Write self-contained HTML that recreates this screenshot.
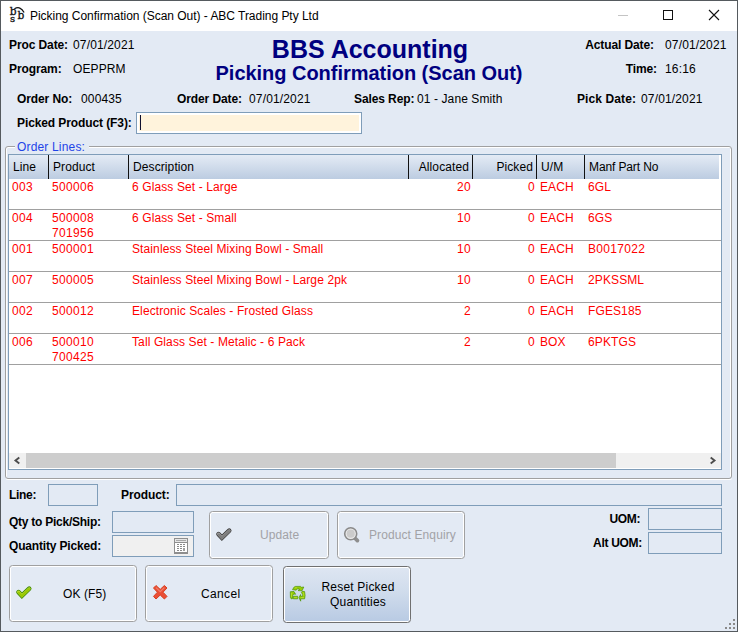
<!DOCTYPE html>
<html><head><meta charset="utf-8">
<style>
*{box-sizing:border-box;margin:0;padding:0}
html,body{width:738px;height:632px;overflow:hidden;background:#555a5e}
body{font-family:"Liberation Sans",sans-serif;font-size:12px;color:#000;position:relative}
/* all children of .win are positioned in absolute page coordinates */
.win{position:absolute;left:0;top:0;width:738px;height:632px}
.bg{position:absolute;left:1px;top:1px;width:736px;height:630px;background:#e3eaf4}
.tbar{position:absolute;left:1px;top:1px;width:736px;height:30px;background:#fff}
.a{position:absolute;white-space:nowrap;line-height:14px;letter-spacing:.1px}
.r{text-align:right}
.b{font-weight:bold;letter-spacing:-.1px}
.d{letter-spacing:.15px}
.t{letter-spacing:.33px}
.inp{position:absolute;border:1px solid #7f9db9;background:#e3eaf4}
.btn{position:absolute;border:1px solid #a0a0a0;border-radius:3.5px;background:#e3eaf4;box-shadow:inset 0 0 0 1px #fff}
.navy{color:#000080}
.th{position:absolute;top:0;height:24px;line-height:25px;padding-left:4px;white-space:nowrap;letter-spacing:.1px}
.sep{position:absolute;top:0;width:1px;height:24px;background:#111}
.row{position:absolute;left:9px;width:712px;height:31px;border-bottom:1px solid #a0a0a0;background:#fff;color:#ff0000}
.row span{position:absolute;top:1px;line-height:15px;white-space:nowrap;letter-spacing:.11px}
.row span.t{letter-spacing:.33px}
svg{position:absolute;overflow:visible}
</style></head><body>
<div class="win">
<div class="bg"></div>
<div class="tbar"></div>
<svg style="left:0;top:0" width="40" height="31">
  <g font-family="DejaVu Serif, Liberation Serif, serif" font-size="10.6" fill="#111" stroke="#111" stroke-width=".3">
  <text x="9.7" y="14.8">b</text>
  <text x="10.1" y="22.2" font-size="10">s</text>
  <text x="17.6" y="18.9">b</text></g>
  <path d="M14.4 8.8 Q20.4 5.4 24.1 12.5" fill="none" stroke="#111" stroke-width="1.3"/>
</svg>
<div class="a" style="left:30px;top:8px;font-size:12px;line-height:16px;letter-spacing:-.03px">Picking Confirmation (Scan Out) - ABC Trading Pty Ltd</div>
<svg style="left:600px;top:0" width="137" height="31">
  <path d="M18 15.5 H28" stroke="#c4c4c4" stroke-width="1"/>
  <rect x="63.5" y="10.5" width="9" height="9" fill="none" stroke="#111" stroke-width="1"/>
  <path d="M109 10 L119 20 M119 10 L109 20" stroke="#111" stroke-width="1.1"/>
</svg>

<div class="a b" style="left:9px;top:38px">Proc Date:</div><div class="a d" style="left:73px;top:38px">07/01/2021</div>
<div class="a b" style="left:9px;top:62px">Program:</div><div class="a" style="left:73px;top:62px">OEPPRM</div>
<div class="a b navy" style="left:1px;width:738px;text-align:center;top:35px;font-size:25px;line-height:28px;letter-spacing:0">BBS Accounting</div>
<div class="a b navy" style="left:1px;width:736px;text-align:center;top:61px;font-size:20px;line-height:24px;letter-spacing:-.03px">Picking Confirmation (Scan Out)</div>
<div class="a b r" style="left:554px;width:100px;top:38px">Actual Date:</div><div class="a d" style="left:665px;top:38px">07/01/2021</div>
<div class="a b r" style="left:557px;width:100px;top:62px">Time:</div><div class="a d" style="left:665px;top:62px">16:16</div>

<div class="a b" style="left:17px;top:92px">Order No:</div><div class="a d" style="left:81px;top:92px">000435</div>
<div class="a b" style="left:177px;top:92px">Order Date:</div><div class="a d" style="left:249px;top:92px">07/01/2021</div>
<div class="a b" style="left:354px;top:92px">Sales Rep:</div><div class="a" style="left:417px;top:92px">01 - Jane Smith</div>
<div class="a b" style="left:577px;top:92px;letter-spacing:.1px">Pick Date:</div><div class="a d" style="left:641px;top:92px">07/01/2021</div>

<div class="a b" style="left:17px;top:116px">Picked Product (F3):</div>
<div class="inp" style="left:136px;top:112px;width:226px;height:22px;background:#fff3dc;box-shadow:inset 0 0 0 2px #fff"><div style="position:absolute;left:3px;top:2px;width:1px;height:15px;background:#101030"></div></div>

<!-- group box -->
<div style="position:absolute;left:6px;top:147px;width:726px;height:333px;border:1px solid #fff;border-right:none;border-radius:2px"></div><div style="position:absolute;left:730px;top:149px;width:1px;height:328px;background:#fff"></div>
<div style="position:absolute;left:5px;top:146px;width:727px;height:333px;border:1px solid #a0a0a0;border-radius:3px"></div>
<div class="a" style="left:15px;top:140px;padding:0 4px 0 2px;background:#e3eaf4;color:#1f45e8;letter-spacing:.17px">Order Lines:</div>

<!-- table -->
<div style="position:absolute;left:8px;top:154px;width:714px;height:316px;border:1px solid #7f9db9;background:#fff"></div>
<div style="position:absolute;left:9px;top:155px;width:710px;height:24px;background:linear-gradient(#e4ebf5,#bccce1)">
  <div class="th" style="left:0">Line</div>
  <div class="sep" style="left:39px"></div><div class="th" style="left:40px">Product</div>
  <div class="sep" style="left:119px"></div><div class="th" style="left:120px">Description</div>
  <div class="sep" style="left:399px"></div><div class="th r" style="left:400px;width:60px;padding:0">Allocated</div>
  <div class="sep" style="left:463px"></div><div class="th r" style="left:464px;width:60px;padding:0">Picked</div>
  <div class="sep" style="left:527px"></div><div class="th" style="left:528px">U/M</div>
  <div class="sep" style="left:575px"></div><div class="th" style="left:576px;letter-spacing:-.12px">Manf Part No</div>
</div>
<div class="row" style="top:179px"><span class="t" style="left:3px">003</span><span class="t" style="left:43px">500006</span><span style="left:123px">6 Glass Set - Large</span><span class="r t" style="left:402px;width:60px">20</span><span class="r t" style="left:466px;width:60px">0</span><span style="left:531px">EACH</span><span style="left:579px">6GL</span></div>
<div class="row" style="top:210px"><span class="t" style="left:3px">004</span><span class="t" style="left:43px">500008<br>701956</span><span style="left:123px">6 Glass Set - Small</span><span class="r t" style="left:402px;width:60px">10</span><span class="r t" style="left:466px;width:60px">0</span><span style="left:531px">EACH</span><span style="left:579px">6GS</span></div>
<div class="row" style="top:241px"><span class="t" style="left:3px">001</span><span class="t" style="left:43px">500001</span><span style="left:123px">Stainless Steel Mixing Bowl - Small</span><span class="r t" style="left:402px;width:60px">10</span><span class="r t" style="left:466px;width:60px">0</span><span style="left:531px">EACH</span><span class="t" style="left:579px">B0017022</span></div>
<div class="row" style="top:272px"><span class="t" style="left:3px">007</span><span class="t" style="left:43px">500005</span><span style="left:123px">Stainless Steel Mixing Bowl - Large 2pk</span><span class="r t" style="left:402px;width:60px">10</span><span class="r t" style="left:466px;width:60px">0</span><span style="left:531px">EACH</span><span style="left:579px">2PKSSML</span></div>
<div class="row" style="top:303px"><span class="t" style="left:3px">002</span><span class="t" style="left:43px">500012</span><span style="left:123px">Electronic Scales - Frosted Glass</span><span class="r t" style="left:402px;width:60px">2</span><span class="r t" style="left:466px;width:60px">0</span><span style="left:531px">EACH</span><span style="left:579px">FGES185</span></div>
<div class="row" style="top:334px"><span class="t" style="left:3px">006</span><span class="t" style="left:43px">500010<br>700425</span><span style="left:123px">Tall Glass Set - Metalic - 6 Pack</span><span class="r t" style="left:402px;width:60px">2</span><span class="r t" style="left:466px;width:60px">0</span><span style="left:531px">BOX</span><span style="left:579px">6PKTGS</span></div>
<!-- scrollbar -->
<div style="position:absolute;left:9px;top:453px;width:712px;height:15px;background:#f0f0f0"></div>
<div style="position:absolute;left:26px;top:453px;width:590px;height:15px;background:#cdcdcd"></div>
<svg style="left:9px;top:453px" width="712" height="15">
  <path d="M10.3 4.6 L6.5 7.5 L10.3 10.4" fill="none" stroke="#4d4d4d" stroke-width="1.9"/>
  <path d="M701.7 4.6 L705.5 7.5 L701.7 10.4" fill="none" stroke="#4d4d4d" stroke-width="1.9"/>
</svg>

<!-- bottom fields -->
<div class="a b" style="left:9px;top:488px;letter-spacing:-.3px">Line:</div>
<div class="inp" style="left:48px;top:484px;width:50px;height:22px"></div>
<div class="a b" style="left:121px;top:488px">Product:</div>
<div class="inp" style="left:176px;top:484px;width:546px;height:22px"></div>

<div class="a b" style="left:9px;top:515px;letter-spacing:-.25px">Qty to Pick/Ship:</div>
<div class="inp" style="left:112px;top:511px;width:82px;height:22px"></div>
<div class="a b" style="left:9px;top:539px;letter-spacing:-.17px">Quantity Picked:</div>
<div class="inp" style="left:112px;top:535px;width:82px;height:22px;background:#f0f0f0"></div>
<svg style="left:174px;top:538px" width="14" height="16">
  <rect x="0" y="0" width="14" height="16" fill="#8e8e8e"/>
  <rect x="1" y="1" width="12" height="3" fill="#e6e6e6"/>
  <rect x="2" y="2" width="10" height="1" fill="#a8a8a8"/>
  <rect x="1" y="5" width="12" height="9" fill="#fff"/>
  <g fill="#8a8a8a">
    <rect x="3" y="6" width="2" height="1"/><rect x="6" y="6" width="2" height="1"/><rect x="9" y="6" width="2" height="1"/>
    <rect x="3" y="8" width="2" height="1"/><rect x="6" y="8" width="2" height="1"/><rect x="9" y="8" width="2" height="1"/>
    <rect x="3" y="10" width="2" height="1"/><rect x="6" y="10" width="2" height="1"/><rect x="9" y="10" width="2" height="3" fill="#a0a0a0"/>
    <rect x="3" y="12" width="2" height="1"/><rect x="6" y="12" width="2" height="1"/>
  </g>
</svg>

<div class="btn" style="left:209px;top:511px;width:120px;height:48px"></div>
<svg style="left:216px;top:528px" width="17" height="14"><g fill="none" stroke-linecap="round" stroke-linejoin="miter"><path d="M2.5 6.1 L5.9 9.7 L13.2 2.7" stroke="#3c3c3c" stroke-width="4.6"/><path d="M2.5 6.1 L5.9 9.7 L13.2 2.7" stroke="#a8a8a8" stroke-width="2.9"/><path d="M2.7 6.5 L5.9 9.9 L13.1 3" stroke="#7c7c7c" stroke-width="2.1"/></g></svg>
<div class="a" style="left:260px;top:528px;color:#a2a2a6">Update</div>
<div class="btn" style="left:337px;top:511px;width:128px;height:48px"></div>
<svg style="left:343px;top:526px" width="18" height="18"><path d="M11.8 12 L14.4 14.6" stroke="#8e8e8e" stroke-width="3.8" stroke-linecap="round"/><circle cx="7.7" cy="7.7" r="6" fill="#ececec" stroke="#8a8a8a" stroke-width="1.6"/><circle cx="7.7" cy="7.7" r="4.1" fill="#cbcbcb"/></svg>
<div class="a" style="left:369px;top:528px;color:#a2a2a6">Product Enquiry</div>

<div class="a b r" style="left:540px;width:100px;top:512px;letter-spacing:-.4px">UOM:</div>
<div class="inp" style="left:648px;top:508px;width:74px;height:22px"></div>
<div class="a b r" style="left:542px;width:100px;top:536px;letter-spacing:-.3px">Alt UOM:</div>
<div class="inp" style="left:648px;top:532px;width:74px;height:22px"></div>

<div class="btn" style="left:9px;top:565px;width:128px;height:57px"></div>
<svg style="left:16px;top:586px" width="17" height="14"><g fill="none" stroke-linecap="round" stroke-linejoin="miter"><path d="M2.5 6.1 L5.9 9.7 L13.2 2.7" stroke="#3f8a00" stroke-width="4.6"/><path d="M2.5 6.1 L5.9 9.7 L13.2 2.7" stroke="#c6e23c" stroke-width="2.9"/><path d="M2.7 6.5 L5.9 9.9 L13.1 3" stroke="#98c800" stroke-width="2.1"/></g></svg>
<div class="a" style="left:63px;top:587px">OK (F5)</div>
<div class="btn" style="left:145px;top:565px;width:128px;height:57px"></div>
<svg style="left:153px;top:585px" width="15" height="15"><path d="M3 0.5 L7.2 4.4 L11.4 0.5 L14 3 L10 7.2 L14 11.4 L11.4 14 L7.2 10 L3 14 L0.5 11.4 L4.4 7.2 L0.5 3 Z" fill="#ea4e36" stroke="#d8401f" stroke-width="1" stroke-linejoin="round"/><path d="M3 2.6 L7.2 6.6 L11.4 2.6" fill="none" stroke="#f2806c" stroke-width="1.2"/></svg>
<div class="a" style="left:201px;top:587px;letter-spacing:.35px">Cancel</div>
<div class="btn" style="left:283px;top:566px;width:128px;height:57px;background:linear-gradient(#dee6f2,#d0dcec 45%,#b8cae3);border-color:#707070"></div>
<svg style="left:290px;top:586px" width="16" height="16" viewBox="0 0 16 16">
  <g fill="#96cc08" stroke="#4c9406" stroke-width=".7" stroke-linejoin="round">
  <path d="M2.5 3.6 L4.2 1 Q4.8 .4 5.8 .4 L10.5 .4 L11.5 1.3 L13.8 1 L12 4.8 L8.1 4.6 L9.7 3.3 L7.6 2.7 L6.2 4.2 Z"/>
  <path d="M.3 5.7 L4 5.5 L5.6 8.3 L3.7 7.9 L2.7 9.6 L2.6 12.6 L1.3 12.9 L.4 11.4 Z"/>
  <path d="M3.3 10.3 H7.7 V12.8 H3.3 Z"/>
  <path d="M12.3 5.3 L14.6 5.6 L15.1 9.6 L14.6 12.8 L10.6 12.8 L10.7 15.2 L9 11.6 L10.6 8.5 L10.6 10.3 L12.5 10.3 L12.8 8.8 L11.4 6.4 Z"/>
  </g>
  <g fill="none" stroke="#bfe22c" stroke-width=".8" stroke-linecap="round"><path d="M5 1.9 L6.4 1.6"/><path d="M1.5 7.2 L1.5 10.6"/><path d="M13.6 7 L13.8 9.4"/><path d="M4.2 11.6 H6.8"/><path d="M11.2 11.6 H13.6"/></g>
</svg>
<div class="a" style="left:305px;width:106px;text-align:center;top:580px;line-height:15px;white-space:normal;letter-spacing:.2px">Reset Picked Quantities</div>

<!-- size grip -->
<svg style="left:722px;top:616px" width="14" height="14"><g fill="#8a8a8a"><rect x="11" y="3" width="2" height="2"/><rect x="7" y="7" width="2" height="2"/><rect x="11" y="7" width="2" height="2"/><rect x="3" y="11" width="2" height="2"/><rect x="7" y="11" width="2" height="2"/><rect x="11" y="11" width="2" height="2"/></g></svg>
</div>
</body></html>
